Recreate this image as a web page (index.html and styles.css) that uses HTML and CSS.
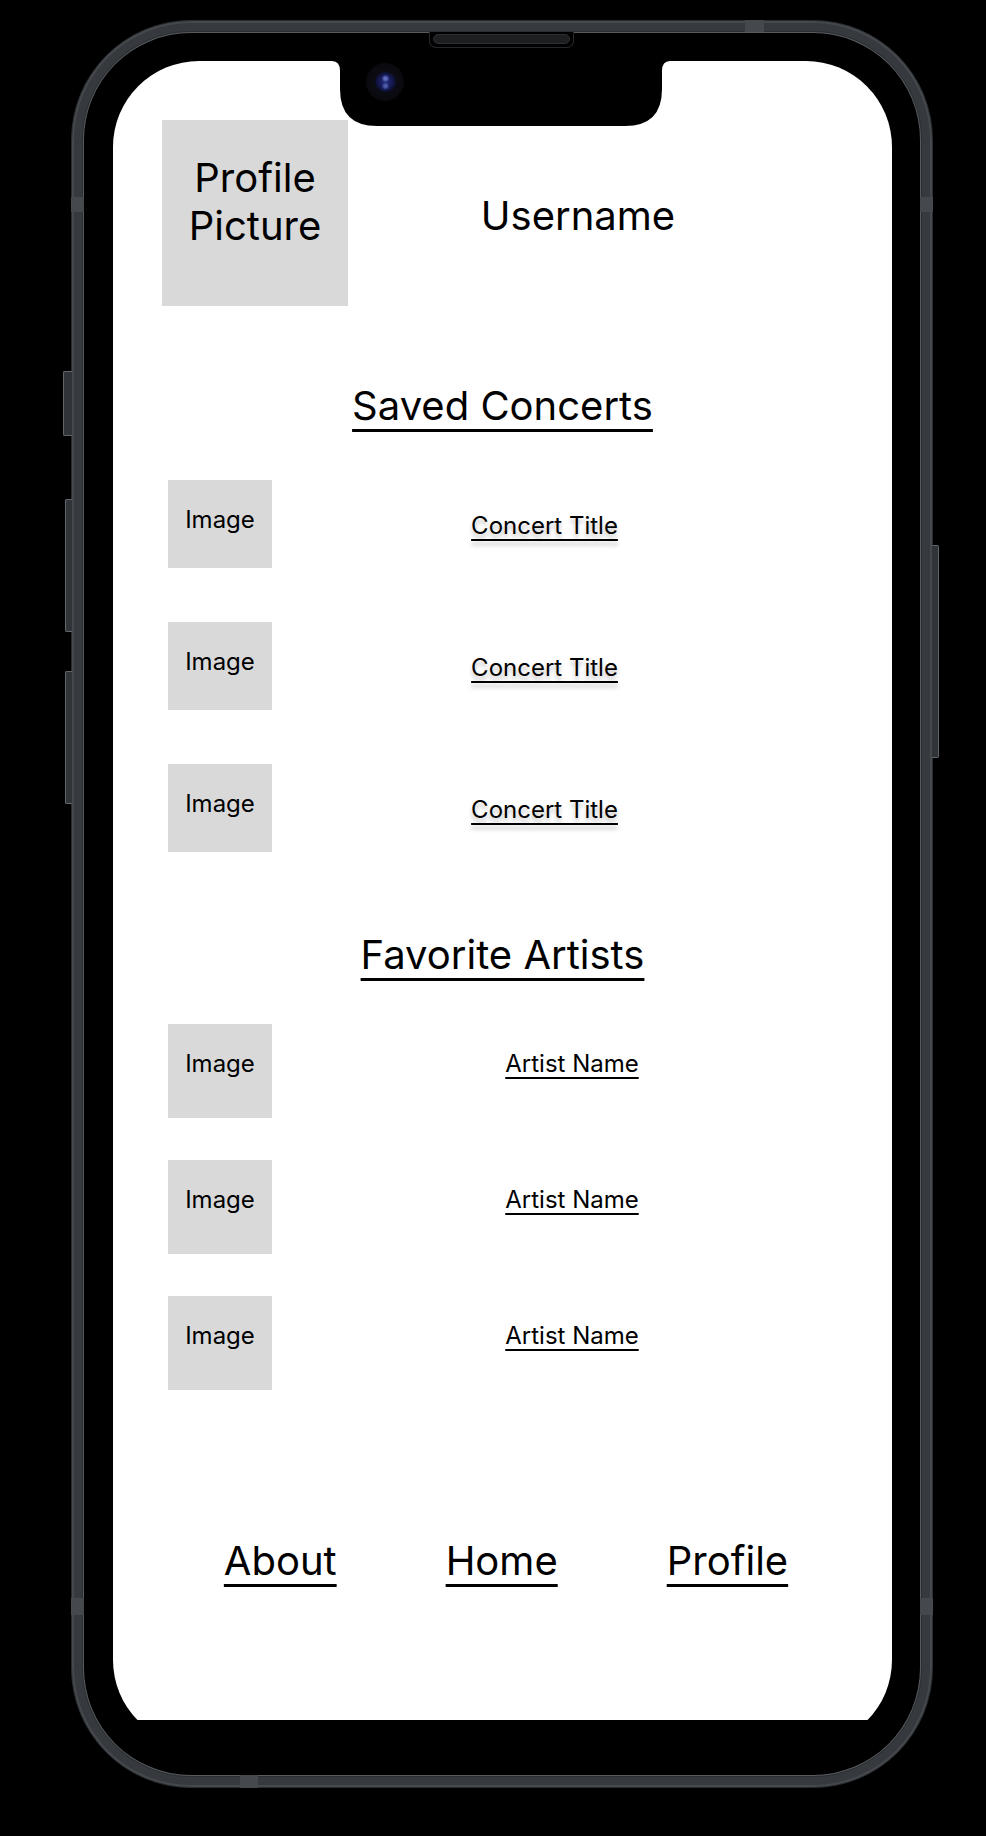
FILE: index.html
```html
<!DOCTYPE html>
<html lang="en">
<head>
<meta charset="utf-8">
<title>Profile</title>
<link rel="stylesheet" href="styles.css">
</head>
<body>
<div class="stage">
  <div class="phone">
    <span class="antenna ant-left-top"></span>
    <span class="antenna ant-left-bottom"></span>
    <span class="antenna ant-right-top"></span>
    <span class="antenna ant-right-bottom"></span>
    <span class="antenna ant-top"></span>
    <span class="antenna ant-bottom"></span>
    <div class="speaker"><span class="grill"></span></div>
    <div class="bezel">
      <main class="screen">
        <svg class="notch" width="338" height="65" viewBox="0 0 338 65" aria-hidden="true">
          <path d="M0 0 H338 Q330 0 330 10 V28 Q330 65 293 65 H45 Q8 65 8 28 V10 Q8 0 0 0 Z" fill="#000"/>
        </svg>
        <span class="camera"><span class="lens"></span></span>

        <header class="profile-head">
          <div class="avatar">Profile<br>Picture</div>
          <h1 class="username">Username</h1>
        </header>

        <section>
          <h2 class="section-title"><a href="#">Saved Concerts</a></h2>
          <ul class="item-list concerts">
            <li class="item"><div class="thumb">Image</div><p class="item-title"><a href="#">Concert Title</a></p></li>
            <li class="item"><div class="thumb">Image</div><p class="item-title"><a href="#">Concert Title</a></p></li>
            <li class="item"><div class="thumb">Image</div><p class="item-title"><a href="#">Concert Title</a></p></li>
          </ul>
        </section>

        <section>
          <h2 class="section-title artists-title"><a href="#">Favorite Artists</a></h2>
          <ul class="item-list artists">
            <li class="item"><div class="thumb">Image</div><p class="item-title"><a href="#">Artist Name</a></p></li>
            <li class="item"><div class="thumb">Image</div><p class="item-title"><a href="#">Artist Name</a></p></li>
            <li class="item"><div class="thumb">Image</div><p class="item-title"><a href="#">Artist Name</a></p></li>
          </ul>
        </section>

        <nav class="bottom-nav">
          <a href="#">About</a>
          <a href="#">Home</a>
          <a href="#">Profile</a>
        </nav>
      </main>
    </div>
  </div>
  <span class="side-btn btn-mute"></span>
  <span class="side-btn btn-vol-up"></span>
  <span class="side-btn btn-vol-down"></span>
  <span class="side-btn btn-power"></span>
</div>
</body>
</html>
```

FILE: styles.css
```css
* {
  box-sizing: border-box;
  margin: 0;
  padding: 0;
}

html,
body {
  background: #000;
}

body {
  width: 986px;
  height: 1836px;
  overflow: hidden;
  font-family: Inter, "Noto Sans", Arial, sans-serif;
  color: #000;
}

a {
  color: inherit;
}

.stage {
  position: relative;
  width: 986px;
  height: 1836px;
  padding: 20px 0 0 71px;
}

/* ---------- phone frame ---------- */
.phone {
  position: relative;
  width: 862px;
  height: 1768px;
  padding: 12px;
  border: 1px solid #2a2d30;
  border-radius: 120px;
  background: #36393d;
  box-shadow: inset 0 0 0 2px #45494d;
}

.bezel {
  width: 836px;
  height: 1742px;
  padding: 28px 28px 29px 29px;
  border-radius: 107px;
  background: #000;
  box-shadow: 0 0 0 1px #575b5f, 0 0 0 2px #2c2f32;
}

.antenna {
  position: absolute;
  background: #45494d;
}

.ant-left-top { left: -1px; top: 176px; width: 13px; height: 15px; }
.ant-left-bottom { left: -1px; top: 1577px; width: 13px; height: 17px; }
.ant-right-top { left: 848px; top: 176px; width: 13px; height: 15px; }
.ant-right-bottom { left: 848px; top: 1577px; width: 13px; height: 17px; }
.ant-top { left: 673px; top: -1px; width: 19px; height: 12px; }
.ant-bottom { left: 168px; top: 1754px; width: 18px; height: 13px; }

.speaker {
  position: absolute;
  left: 357px;
  top: 11px;
  width: 145px;
  height: 16px;
  display: flex;
  padding: 2px 3px 3px;
  background: #000;
  border: 1px solid #25272a;
  border-top: none;
  border-radius: 0 0 7px 7px;
}

.grill {
  flex: 1;
  border-radius: 5px;
  background: #1d1f21;
  border: 1px solid #2c2e31;
}

.side-btn {
  position: absolute;
  background: #303438;
  border: 1px solid #62666a;
  border-right: none;
  border-radius: 2px 0 0 2px;
}

.btn-mute { left: 63px; top: 371px; width: 9px; height: 65px; }
.btn-vol-up { left: 65px; top: 499px; width: 7px; height: 133px; }
.btn-vol-down { left: 65px; top: 671px; width: 7px; height: 133px; }
.btn-power {
  left: 932px;
  top: 545px;
  width: 7px;
  height: 213px;
  border: 1px solid #62666a;
  border-left: none;
  border-radius: 0 2px 2px 0;
}

/* ---------- screen ---------- */
.screen {
  position: relative;
  width: 779px;
  height: 1685px;
  border-radius: 86px;
  overflow: hidden;
  background: linear-gradient(#fff 0, #fff 1659px, #000 1659px);
}

.notch {
  position: absolute;
  left: 219px;
  top: 0;
  display: block;
}

.camera {
  position: absolute;
  left: 253px;
  top: 2px;
  width: 38px;
  height: 38px;
  border-radius: 50%;
  background: radial-gradient(circle, #0f0f18 0, #0a0a10 60%, #050507 100%);
  display: flex;
  align-items: center;
  justify-content: center;
}

.lens {
  width: 21px;
  height: 20px;
  border-radius: 50%;
  background:
    radial-gradient(circle at 50% 33%, #6f7cd0 0, #4d58a8 2px, transparent 4px),
    radial-gradient(circle at 50% 70%, #5d6ab8 0, #3f4a98 2px, transparent 4px),
    radial-gradient(circle, #242b7c 0, #151a52 45%, #080a22 80%, #04050d 100%);
}

/* ---------- header ---------- */
.profile-head {
  display: flex;
  align-items: center;
  padding: 59px 84px 0 49px;
}

.avatar {
  width: 186px;
  height: 186px;
  padding-top: 34px;
  background: #d9d9d9;
  font-size: 40px;
  line-height: 48px;
  text-align: center;
}

.username {
  flex: 1;
  padding-top: 6px;
  font-size: 40px;
  line-height: 48px;
  font-weight: 400;
  text-align: center;
}

/* ---------- sections ---------- */
.section-title {
  margin-top: 76px;
  font-size: 40px;
  line-height: 48px;
  font-weight: 400;
  text-align: center;
}

.section-title a,
.bottom-nav a {
  text-decoration: underline;
  text-decoration-thickness: 3px;
  text-underline-offset: 9px;
}

.artists-title {
  margin-top: 79px;
}

.item-list {
  list-style: none;
  display: flex;
  flex-direction: column;
  padding-left: 55px;
}

.item {
  display: flex;
}

.thumb {
  width: 104px;
  height: 100%;
  padding-top: 25px;
  background: #d9d9d9;
  font-size: 24px;
  line-height: 29px;
  text-align: center;
}

.item-title {
  flex: 1;
  font-size: 24px;
  line-height: 29px;
  text-align: center;
}

.item-title a {
  text-decoration: underline;
  text-decoration-thickness: 2px;
  text-underline-offset: 5px;
}

.concerts {
  margin-top: 50px;
  gap: 54px;
}

.concerts .item {
  height: 88px;
}

.concerts .item-title {
  padding: 31px 75px 0 0;
}

.concerts .item-title a {
  text-shadow: 0 4px 4px rgba(0, 0, 0, 0.25);
}

.artists {
  margin-top: 45px;
  gap: 42px;
}

.artists .item {
  height: 94px;
}

.artists .item-title {
  padding: 25px 20px 0 0;
}

/* ---------- bottom nav ---------- */
.bottom-nav {
  margin-top: 147px;
  padding-left: 7px;
  display: flex;
  justify-content: center;
  gap: 109px;
  font-size: 40px;
  line-height: 48px;
}
```
